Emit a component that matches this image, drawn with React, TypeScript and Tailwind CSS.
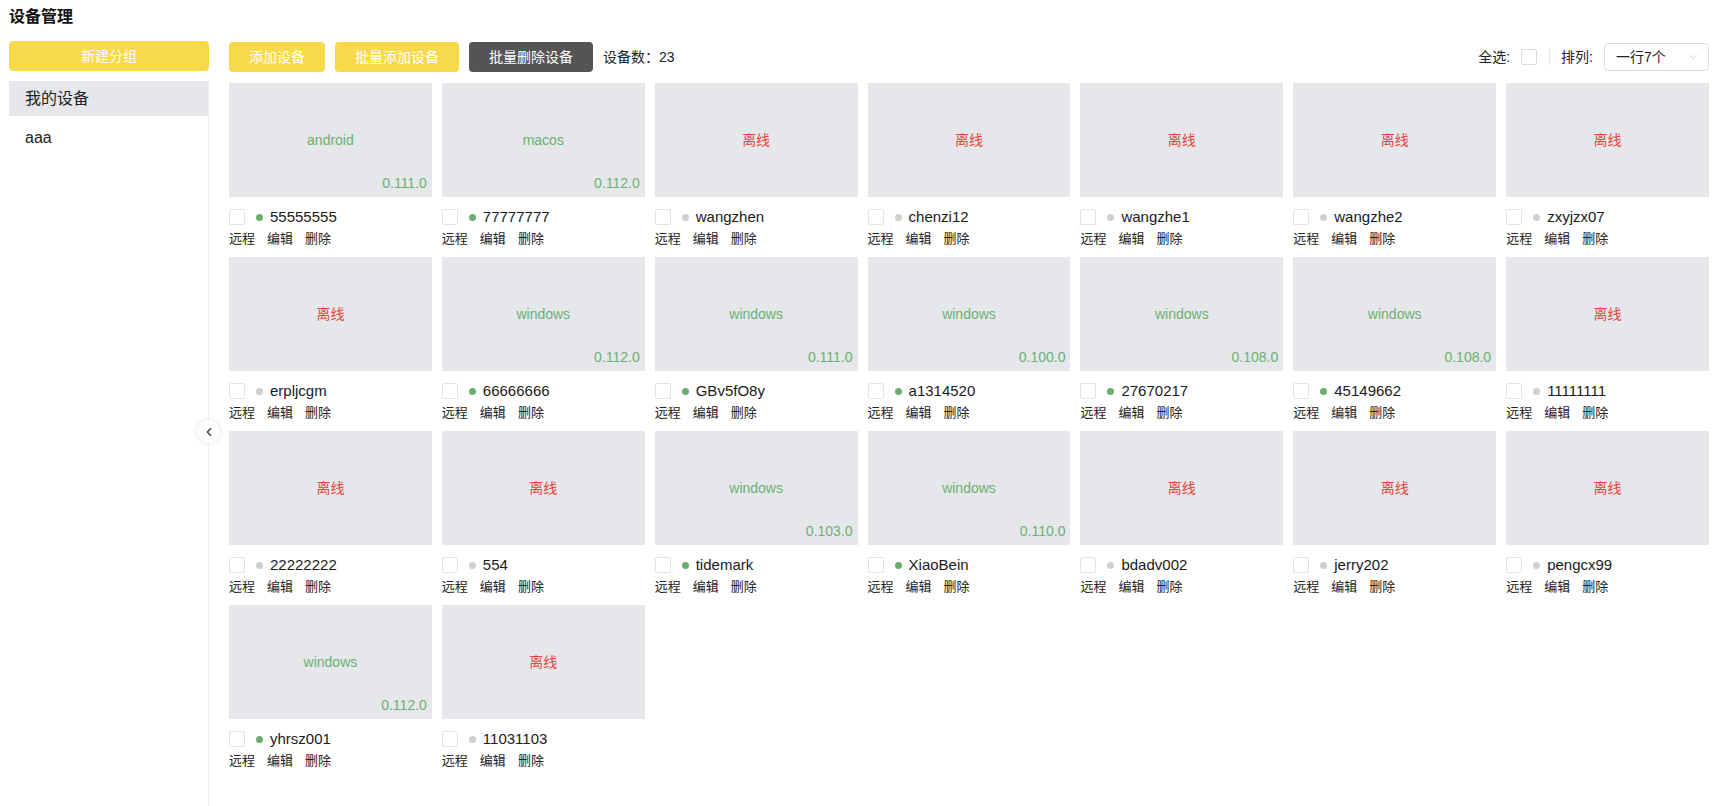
import React from "react";
import { ChevronDown, ChevronLeft } from "lucide-react";

type Dev = { os?: string; ver?: string; name: string };

const devices: Dev[] = [
  { os: "android", ver: "0.111.0", name: "55555555" },
  { os: "macos", ver: "0.112.0", name: "77777777" },
  { name: "wangzhen" },
  { name: "chenzi12" },
  { name: "wangzhe1" },
  { name: "wangzhe2" },
  { name: "zxyjzx07" },
  { name: "erpljcgm" },
  { os: "windows", ver: "0.112.0", name: "66666666" },
  { os: "windows", ver: "0.111.0", name: "GBv5fO8y" },
  { os: "windows", ver: "0.100.0", name: "a1314520" },
  { os: "windows", ver: "0.108.0", name: "27670217" },
  { os: "windows", ver: "0.108.0", name: "45149662" },
  { name: "11111111" },
  { name: "22222222" },
  { name: "554" },
  { os: "windows", ver: "0.103.0", name: "tidemark" },
  { os: "windows", ver: "0.110.0", name: "XiaoBein" },
  { name: "bdadv002" },
  { name: "jerry202" },
  { name: "pengcx99" },
  { os: "windows", ver: "0.112.0", name: "yhrsz001" },
  { name: "11031103" },
];

function Card({ d }: { d: Dev }) {
  const online = !!d.os;
  return (
    <div className="flex flex-col">
      <div className="relative h-[114px] bg-[#e5e7eb] flex items-center justify-center">
        {online ? (
          <span className="text-[14px] text-[#6cb072]">{d.os}</span>
        ) : (
          <span className="text-[14px] text-[#e8453c]">离线</span>
        )}
        {d.ver && (
          <span className="absolute right-[5px] bottom-[3px] text-[14px] text-[#6cb072]">{d.ver}</span>
        )}
      </div>
      <div className="mt-[9px] h-[22px] flex items-center">
        <span className="w-[16px] h-[16px] border border-[#e3e3e3] rounded-[2px] bg-white" />
        <span
          className={
            online
              ? "ml-[11px] w-[7px] h-[7px] rounded-full bg-[#6aad6f]"
              : "ml-[11px] w-[7px] h-[7px] rounded-full bg-[#d0d0d0]"
          }
        />
        <span className="ml-[7px] text-[15px] text-[#1a1a1a]">{d.name}</span>
      </div>
      <div className="h-[22px] flex items-center gap-[12px] text-[13px] text-[#222]">
        <span>远程</span>
        <span>编辑</span>
        <span>删除</span>
      </div>
    </div>
  );
}

export default function App() {
  return (
    <div
      className="h-screen flex flex-col bg-white text-[#222] overflow-hidden"
      style={{ fontFamily: '"Liberation Sans", "Noto Sans CJK SC", sans-serif' }}
    >
      <div className="h-[41px] pl-[9px] pt-[7px] text-[16px] leading-[20px] font-bold text-[#111]">设备管理</div>
      <div className="flex flex-1 min-h-0 pl-[9px] pr-[10px]">
        <div className="w-[200px] flex flex-col">
          <button className="h-[30px] rounded-[4px] bg-[#f8d94a] text-white text-[14px]">新建分组</button>
          <div className="relative mt-[10px] flex-1 border-r border-[#ececec] flex flex-col">
            <div className="h-[35px] bg-[#e5e7eb] pl-[16px] flex items-center text-[16px] text-[#222]">我的设备</div>
            <div className="h-[44px] pl-[16px] flex items-center text-[16px] text-[#222]">aaa</div>
            <button className="absolute top-[339px] right-[-12px] w-[23px] h-[23px] rounded-full bg-white shadow-[0_0_4px_rgba(0,0,0,0.12)] flex items-center justify-center text-[#333]">
              <ChevronLeft size={14} strokeWidth={2} />
            </button>
          </div>
        </div>
        <div className="flex-1 ml-[20px] flex flex-col">
          <div className="mt-[1px] h-[30px] flex items-center">
            <button className="h-[30px] px-[20px] rounded-[4px] bg-[#f8d94a] text-white text-[14px]">添加设备</button>
            <button className="ml-[10px] h-[30px] px-[20px] rounded-[4px] bg-[#f8d94a] text-white text-[14px]">批量添加设备</button>
            <button className="ml-[10px] h-[30px] px-[20px] rounded-[4px] bg-[#545454] text-white text-[14px]">批量删除设备</button>
            <span className="ml-[10px] text-[14px] text-[#222]">设备数：23</span>
            <div className="ml-auto flex items-center">
              <span className="text-[14px] text-[#222]">全选:</span>
              <span className="ml-[11px] w-[16px] h-[16px] border border-[#dcdcdc] rounded-[2px] bg-white" />
              <span className="ml-[12px] w-px h-[18px] bg-[#e8e8e8]" />
              <span className="ml-[11px] text-[14px] text-[#222]">排列:</span>
              <div className="ml-[11px] w-[105px] h-[28px] border border-[#dedede] rounded-[4px] flex items-center pl-[11px] pr-[8px]">
                <span className="text-[14px] text-[#222]">一行7个</span>
                <ChevronDown className="ml-auto text-[#c4c4c4]" size={14} strokeWidth={1.2} />
              </div>
            </div>
          </div>
          <div className="mt-[11px] grid grid-cols-7 gap-x-[10px] gap-y-[7px]">
            {devices.map((d, i) => (
              <Card key={i} d={d} />
            ))}
          </div>
        </div>
      </div>
    </div>
  );
}
